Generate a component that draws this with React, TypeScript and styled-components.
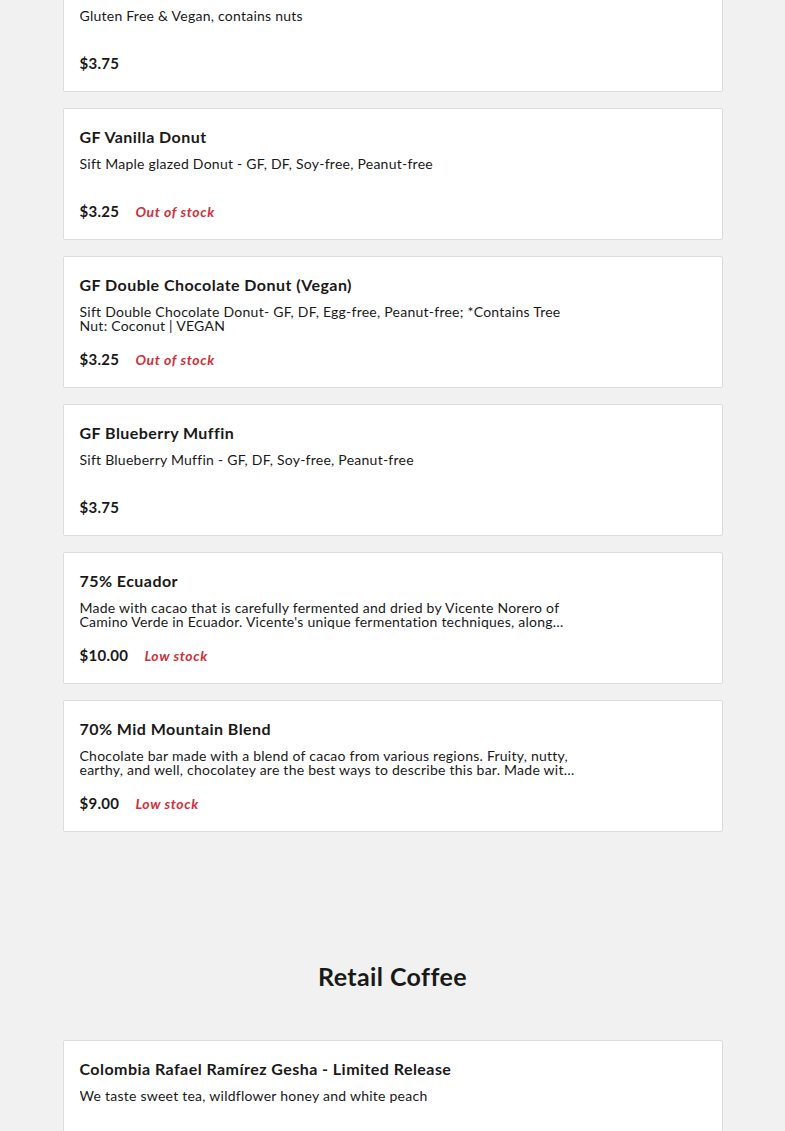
import React from 'react';
import styled, { createGlobalStyle } from 'styled-components';

const GlobalStyle = createGlobalStyle`
  html, body {
    margin: 0;
    padding: 0;
    background: #f1f1f1;
  }
  body {
    font-family: Lato, "Open Sans", Arial, sans-serif;
    color: #191919;
    -webkit-font-smoothing: antialiased;
  }
`;

// the screenshot was taken with the page scrolled part way into the first card
const Page = styled.main`
  width: 660px;
  margin: -40px auto 0;
`;

const Section = styled.section`
  & + & {
    margin-top: 128px;
  }
`;

const SectionTitle = styled.h2`
  margin: 0 0 48px;
  text-align: center;
  font-size: 25px;
  line-height: 32px;
  font-weight: 700;
  letter-spacing: 0.4px;
  color: #191919;
`;

const ItemList = styled.div`
  display: flex;
  flex-direction: column;
  gap: 16px;
`;

const ItemCard = styled.article`
  background: #fff;
  border: 1px solid #dcdcdc;
  border-radius: 2px;
  padding: 16px;
  display: flex;
  flex-direction: column;
`;

const ItemName = styled.h3`
  margin: 0;
  font-size: 16px;
  line-height: 24px;
  font-weight: 700;
  letter-spacing: 0.45px;
  color: #191919;
`;

const ItemDescription = styled.p`
  margin: 8px 0 0;
  max-width: 498px;
  height: 28px;
  font-size: 14px;
  line-height: 14px;
  letter-spacing: 0.25px;
  color: #191919;
  display: -webkit-box;
  -webkit-line-clamp: 2;
  -webkit-box-orient: vertical;
  overflow: hidden;
`;

const PriceRow = styled.div`
  margin-top: 14px;
  display: flex;
  align-items: center;
  gap: 16px;
  height: 24px;
`;

const Price = styled.span`
  font-size: 15px;
  font-weight: 700;
  letter-spacing: 0.3px;
  color: #191919;
`;

const StockTag = styled.span<{ $tone: 'red' | 'green' }>`
  font-size: 14px;
  font-weight: 700;
  font-style: italic;
  letter-spacing: 0.6px;
  color: ${p => (p.$tone === 'red' ? '#d0303a' : '#1a8a4a')};
  ${p => p.$tone === 'green' && `
    background: #e6f6ec;
    font-style: normal;
    padding: 2px 8px;
    border-radius: 10px;
  `}
`;

type Item = {
  name: string;
  description: string;
  price: string;
  stock?: string;
  tone?: 'red' | 'green';
};

const bakery: Item[] = [
  {
    name: 'GF Chocolate Chip Cookie',
    description: 'Gluten Free & Vegan, contains nuts',
    price: '$3.75',
  },
  {
    name: 'GF Vanilla Donut',
    description: 'Sift Maple glazed Donut - GF, DF, Soy-free, Peanut-free',
    price: '$3.25',
    stock: 'Out of stock',
    tone: 'red',
  },
  {
    name: 'GF Double Chocolate Donut (Vegan)',
    description:
      'Sift Double Chocolate Donut- GF, DF, Egg-free, Peanut-free; *Contains Tree Nut: Coconut | VEGAN',
    price: '$3.25',
    stock: 'Out of stock',
    tone: 'red',
  },
  {
    name: 'GF Blueberry Muffin',
    description: 'Sift Blueberry Muffin - GF, DF, Soy-free, Peanut-free',
    price: '$3.75',
  },
  {
    name: '75% Ecuador',
    description:
      "Made with cacao that is carefully fermented and dried by Vicente Norero of Camino Verde in Ecuador. Vicente's unique fermentation techniques, along with the region's rich soil, bring out bright notes of fruit.",
    price: '$10.00',
    stock: 'Low stock',
    tone: 'red',
  },
  {
    name: '70% Mid Mountain Blend',
    description:
      'Chocolate bar made with a blend of cacao from various regions. Fruity, nutty, earthy, and well, chocolatey are the best ways to describe this bar. Made with organic cane sugar.',
    price: '$9.00',
    stock: 'Low stock',
    tone: 'red',
  },
];

const coffee: Item[] = [
  {
    name: 'Colombia Rafael Ramírez Gesha - Limited Release',
    description: 'We taste sweet tea, wildflower honey and white peach',
    price: '$32.00',
    stock: 'Popular',
    tone: 'green',
  },
];

const MenuItem: React.FC<{ item: Item }> = ({ item }) => (
  <ItemCard>
    <ItemName>{item.name}</ItemName>
    <ItemDescription>{item.description}</ItemDescription>
    <PriceRow>
      <Price>{item.price}</Price>
      {item.stock && <StockTag $tone={item.tone ?? 'red'}>{item.stock}</StockTag>}
    </PriceRow>
  </ItemCard>
);

export default function App() {
  return (
    <>
      <GlobalStyle />
      <Page>
        <Section>
          <ItemList>
            {bakery.map((item, index) => (
              <MenuItem key={index} item={item} />
            ))}
          </ItemList>
        </Section>
        <Section>
          <SectionTitle>Retail Coffee</SectionTitle>
          <ItemList>
            {coffee.map((item, index) => (
              <MenuItem key={index} item={item} />
            ))}
          </ItemList>
        </Section>
      </Page>
    </>
  );
}
